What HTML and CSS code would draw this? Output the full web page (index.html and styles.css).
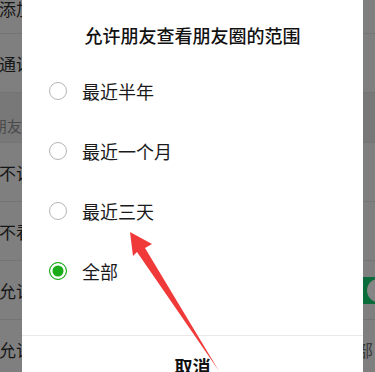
FILE: index.html
```html
<!DOCTYPE html>
<html lang="zh">
<head>
<meta charset="utf-8">
<link rel="stylesheet" href="styles.css">
</head>
<body>
<div class="screen">
  <div class="page">
    <div class="row row-first"><span class="label">添加我的方式</span></div>
    <div class="row"><span class="label">通讯录黑名单</span></div>
    <div class="section-head">朋友圈</div>
    <div class="row"><span class="label">不让他(她)看</span></div>
    <div class="row"><span class="label">不看他(她)</span></div>
    <div class="row"><span class="label">允许陌生人查看十条朋友圈</span><span class="switch"><span class="knob"></span></span></div>
    <div class="row"><span class="label">允许朋友查看朋友圈的范围</span><span class="value">全部</span></div>
  </div>

  <div class="dialog">
    <div class="dialog-title">允许朋友查看朋友圈的范围</div>
    <ul class="options">
      <li class="option"><span class="radio"></span><span class="opt-text">最近半年</span></li>
      <li class="option"><span class="radio"></span><span class="opt-text">最近一个月</span></li>
      <li class="option"><span class="radio"></span><span class="opt-text">最近三天</span></li>
      <li class="option"><span class="radio radio-on"></span><span class="opt-text">全部</span></li>
    </ul>
    <div class="cancel">取消</div>
  </div>

  <svg class="arrow" width="375" height="372" viewBox="0 0 375 372">
    <polygon points="130,232 152,244 145,248 219,371 137,252 133,256" fill="#f03a3a"/>
  </svg>
</div>
</body>
</html>
```

FILE: styles.css
```css
* { box-sizing: border-box; }
html, body { margin: 0; padding: 0; }
body {
  font-family: "Noto Sans CJK SC", "Noto Sans", sans-serif;
  background: #7f7f7f;
}
.screen {
  position: relative;
  width: 375px;
  height: 372px;
  overflow: hidden;
  background: #7f7f7f;
}
.page {
  display: flex;
  flex-direction: column;
}
.row {
  height: 59px;
  display: flex;
  align-items: center;
  justify-content: space-between;
  border-top: 1px solid #747474;
  font-size: 17px;
  color: #161616;
  white-space: nowrap;
  overflow: hidden;
}
.row-first {
  height: 33px;
  border-top: none;
  align-items: flex-start;
  line-height: 17px;
}
.label { margin-left: -1px; }
.section-head {
  height: 50px;
  background: #787878;
  border-top: 1px solid #747474;
  padding-top: 25px;
  font-size: 15px;
  line-height: 16px;
  color: #4a4a4a;
  text-indent: -8px;
  white-space: nowrap;
}
.switch {
  flex: none;
  width: 56px;
  height: 27px;
  border-radius: 14px;
  background: #0a6b3b;
  margin-right: -17px;
  display: flex;
  align-items: center;
  justify-content: flex-end;
  padding-right: 2px;
}
.knob {
  width: 23px;
  height: 23px;
  border-radius: 50%;
  background: #858585;
}
.value {
  flex: none;
  color: #3a3a3a;
  margin-right: 2px;
}

.dialog {
  position: absolute;
  left: 22px;
  top: 0;
  width: 341px;
  height: 420px;
  background: #ffffff;
  padding-top: 23px;
}
.dialog-title {
  text-align: center;
  font-size: 18px;
  line-height: 24px;
  font-weight: 500;
  color: #111;
}
.options {
  list-style: none;
  margin: 14px 0 0 0;
  padding: 0 0 34px 0;
}
.option {
  height: 60px;
  display: flex;
  align-items: center;
  padding-left: 27px;
  gap: 15px;
}
.radio {
  width: 18px;
  height: 18px;
  border-radius: 50%;
  border: 1.5px solid #b4b4b4;
  flex: none;
}
.radio-on {
  border: 1.5px solid #1aad19;
  background: #1aad19;
  box-shadow: inset 0 0 0 2.5px #ffffff;
}
.opt-text {
  font-size: 18px;
  color: #1a1a1a;
}
.cancel {
  border-top: 1px solid #e8e8e8;
  text-align: center;
  padding-top: 18px;
  font-size: 18px;
  line-height: 24px;
  font-weight: 700;
  color: #111;
}
.arrow {
  position: absolute;
  left: 0;
  top: 0;
}
```
